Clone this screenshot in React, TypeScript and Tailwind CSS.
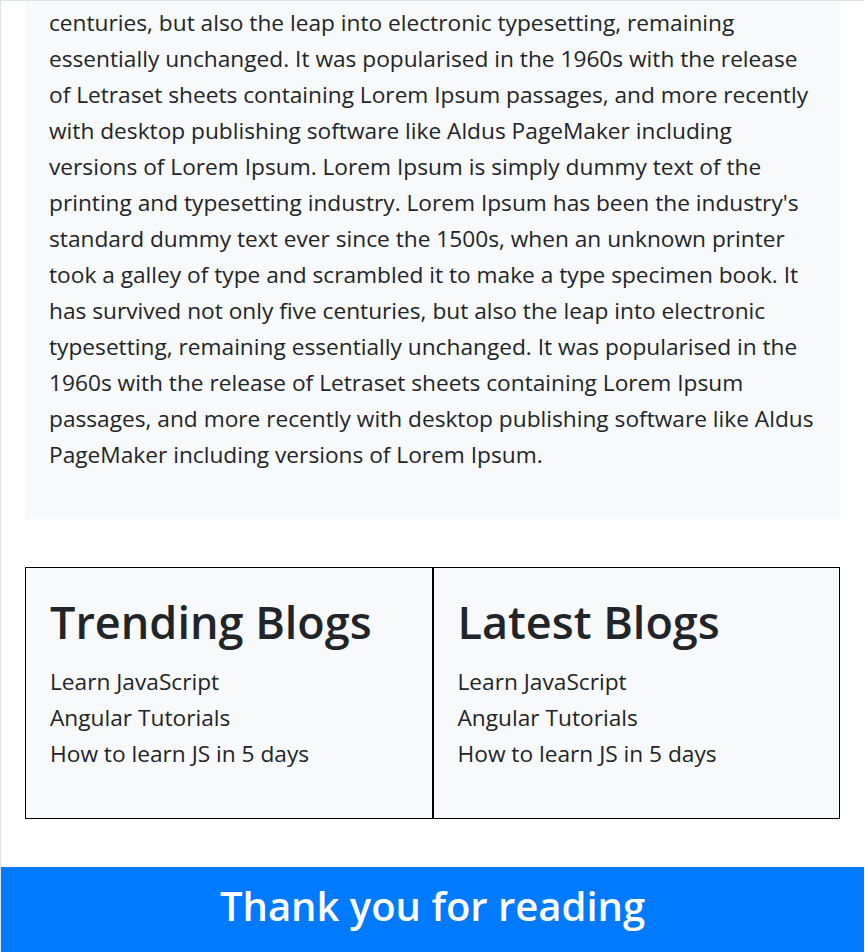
const lines = [
  "centuries, but also the leap into electronic typesetting, remaining",
  "essentially unchanged. It was popularised in the 1960s with the release",
  "of Letraset sheets containing Lorem Ipsum passages, and more recently",
  "with desktop publishing software like Aldus PageMaker including",
  "versions of Lorem Ipsum. Lorem Ipsum is simply dummy text of the",
  "printing and typesetting industry. Lorem Ipsum has been the industry's",
  "standard dummy text ever since the 1500s, when an unknown printer",
  "took a galley of type and scrambled it to make a type specimen book. It",
  "has survived not only five centuries, but also the leap into electronic",
  "typesetting, remaining essentially unchanged. It was popularised in the",
  "1960s with the release of Letraset sheets containing Lorem Ipsum",
  "passages, and more recently with desktop publishing software like Aldus",
  "PageMaker including versions of Lorem Ipsum.",
];

const blogs = ["Learn JavaScript", "Angular Tutorials", "How to learn JS in 5 days"];

const BlogBox = ({ title }: { title: string }) => {
  return (
    <div className="border border-black px-6 pt-[30px] pb-[46px]">
      <h1 className="text-[45px] leading-[48px] font-semibold mb-[18px]">{title}</h1>
      <ul>
        {blogs.map((b) => (
          <li key={b} className="leading-9">{b}</li>
        ))}
      </ul>
    </div>
  );
};

export default function App() {
  return (
    <div className="w-[864px] min-h-[952px] bg-white border-l border-t border-[#dee2e6] text-[#212529] font-['Open_Sans',sans-serif] text-[22.7px]">
      <div className="mx-6 bg-[#f8f9fa] px-6 pt-1 pb-[46px]">
        <p className="leading-9">
          {lines.map((l) => (
            <span key={l} className="block whitespace-nowrap">{l}</span>
          ))}
        </p>
      </div>
      <div className="mx-6 mt-12 grid grid-cols-2 bg-[#f8f9fa]">
        <BlogBox title="Trending Blogs" />
        <BlogBox title="Latest Blogs" />
      </div>
      <footer className="mt-12 bg-[#007bff] text-white text-center h-[86px] pt-[15px]">
        <h1 className="text-[40px] leading-[48px] font-semibold">Thank you for reading</h1>
      </footer>
    </div>
  );
}
